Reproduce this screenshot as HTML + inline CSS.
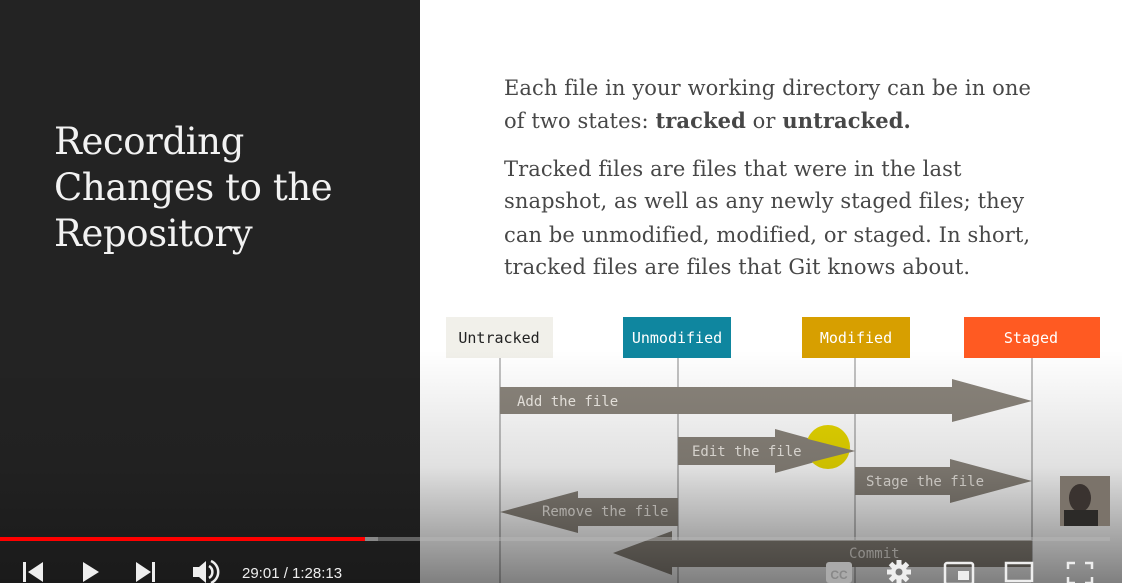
<!DOCTYPE html>
<html><head><meta charset="utf-8"><style>
html,body{margin:0;padding:0;width:1122px;height:583px;overflow:hidden;background:#fff}
#l{position:absolute;left:0;top:0;width:420px;height:583px;background:#232323}
#r{position:absolute;left:420px;top:0;width:702px;height:583px;background:#fff}
.h{position:absolute;left:54px;color:#f2f2f2;font-family:"DejaVu Serif","Liberation Serif",serif;font-size:37px;letter-spacing:-0.4px;white-space:nowrap;font-weight:normal}
.p{position:absolute;left:504px;color:#474747;font-family:"DejaVu Serif","Liberation Serif",serif;font-size:21px;letter-spacing:0.1px;white-space:nowrap}
svg{position:absolute;left:0;top:0}
.mono{font-family:"DejaVu Sans Mono","Liberation Mono",monospace}
</style></head><body>
<div id="l"></div><div id="r"></div>
<div class="h" style="top:120px">Recording</div>
<div class="h" style="top:166px">Changes to the</div>
<div class="h" style="top:212px">Repository</div>
<div class="p" style="top:76px">Each file in your working directory can be in one</div>
<div class="p" style="top:108px">of two states: <b>tracked</b> or <b>untracked.</b></div>
<div class="p" style="top:157px">Tracked files are files that were in the last</div>
<div class="p" style="top:189px">snapshot, as well as any newly staged files; they</div>
<div class="p" style="top:223px">can be unmodified, modified, or staged. In short,</div>
<div class="p" style="top:255px">tracked files are files that Git knows about.</div>
<svg width="1122" height="583" viewBox="0 0 1122 583">
<defs>
<linearGradient id="g" x1="0" y1="0" x2="0" y2="1">
<stop offset="0" stop-color="#000" stop-opacity="0"/>
<stop offset="0.5" stop-color="#000" stop-opacity="0.12"/>
<stop offset="1" stop-color="#000" stop-opacity="0.5"/>
</linearGradient>
</defs>
<g stroke="#999" stroke-width="1.2">
<line x1="500" y1="358" x2="500" y2="583"/><line x1="678" y1="358" x2="678" y2="583"/>
<line x1="855" y1="358" x2="855" y2="583"/><line x1="1032" y1="358" x2="1032" y2="583"/>
</g>
<rect x="446" y="317" width="107" height="41" fill="#f1f0ea"/>
<rect x="623" y="317" width="108" height="41" fill="#0f869f"/>
<rect x="802" y="317" width="108" height="41" fill="#d79f00"/>
<rect x="964" y="317" width="136" height="41" fill="#ff5a22"/>
<g class="mono" font-size="15" text-anchor="middle">
<text x="499" y="343" fill="#222">Untracked</text>
<text x="677" y="343" fill="#fff">Unmodified</text>
<text x="856" y="343" fill="#fff">Modified</text>
<text x="1031" y="343" fill="#fff">Staged</text>
</g>
<g fill="#8a847b">
<polygon points="500,387 952,387 952,379 1032,401 952,422 952,414 500,414"/>
<polygon points="678,437 775,437 775,429 855,451 775,473 775,465 678,465"/>
<polygon points="855,467 950,467 950,459 1032,481 950,503 950,495 855,495"/>
<polygon points="500,512 578,491 578,498 678,498 678,526 578,526 578,533"/>
<polygon points="613,553 672,531 672,540 1032,540 1032,567 672,567 672,575"/>
</g>
<circle cx="828" cy="447" r="22" fill="#e8d800"/>
<polygon points="800,437 855,451 800,465" fill="#8a847b"/>
<g class="mono" font-size="14" fill="#eeeae4">
<text x="517" y="406">Add the file</text>
<text x="692" y="456">Edit the file</text>
<text x="866" y="486">Stage the file</text>
<text x="542" y="516">Remove the file</text>
<text x="849" y="558">Commit</text>
</g>
<rect x="420" y="350" width="702" height="233" fill="url(#g)"/>
<rect x="0" y="350" width="420" height="233" fill="url(#g)" opacity="0.5"/>
<rect x="1060" y="476" width="50" height="50" fill="#7b736a"/>
<ellipse cx="1080" cy="498" rx="11" ry="14" fill="#3a3330"/>
<rect x="1064" y="510" width="34" height="16" fill="#2c2a28"/>
<rect x="0" y="537" width="1110" height="4" fill="#bbb" opacity="0.45"/>
<rect x="0" y="537" width="378" height="4" fill="#888"/>
<rect x="0" y="537" width="365" height="4" fill="#f00"/>
<g fill="#eee">
<rect x="23" y="562" width="3" height="20"/><polygon points="43,562 28,572 43,582"/>
<polygon points="83,562 99,572 83,582"/>
<polygon points="136,562 151,572 136,582"/><rect x="152" y="562" width="3" height="20"/>
<polygon points="193,567 199,567 206,561 206,583 199,577 193,577"/>
<path d="M209,566 a7,7 0 0 1 0,12" stroke="#eee" stroke-width="2.5" fill="none"/>
<path d="M211,561 a12,12 0 0 1 0,22" stroke="#eee" stroke-width="2.5" fill="none"/>
</g>
<text x="242" y="578" font-family="Liberation Sans,sans-serif" font-size="15" fill="#eee">29:01 / 1:28:13</text>
<rect x="826" y="562" width="26" height="21" rx="3" fill="#aaa"/>
<text x="839" y="579" font-family="Liberation Sans,sans-serif" font-weight="bold" font-size="12" fill="#888" text-anchor="middle">CC</text>
<g fill="#eee" transform="translate(899,572)">
<circle r="8"/>
<rect x="-2.5" y="-12" width="5" height="24"/>
<rect x="-2.5" y="-12" width="5" height="24" transform="rotate(45)"/>
<rect x="-2.5" y="-12" width="5" height="24" transform="rotate(90)"/>
<rect x="-2.5" y="-12" width="5" height="24" transform="rotate(135)"/>
<circle r="3.5" fill="#777"/>
</g>
<g stroke="#eee" stroke-width="2.5" fill="none">
<rect x="945" y="563" width="28" height="21" rx="2"/>
<rect x="1006" y="563" width="26" height="18"/>
<path d="M1068,569 v-6 h7 M1085,563 h7 v6 M1068,577 v6 h7 M1092,577 v6 h-7"/>
</g>
<rect x="958" y="571" width="11" height="9" fill="#eee"/>
</svg>
</body></html>
